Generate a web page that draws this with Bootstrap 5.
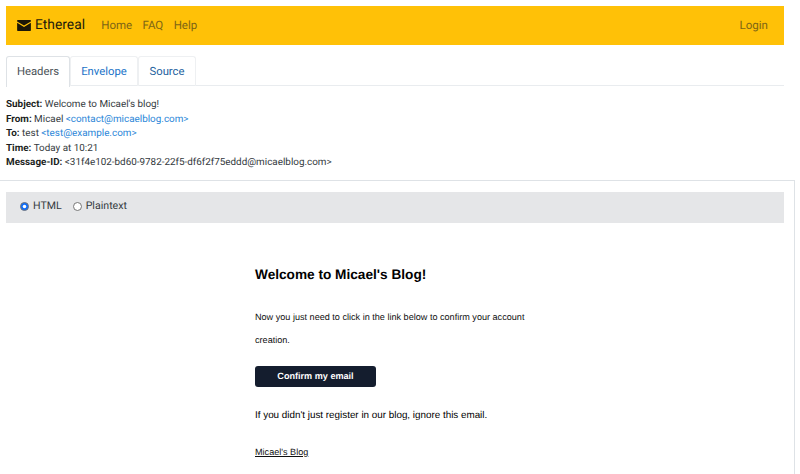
<!DOCTYPE html>
<html lang="en"><head><meta charset="utf-8"><title>Ethereal</title>
<link href="https://cdn.jsdelivr.net/npm/bootstrap@5.3.0/dist/css/bootstrap.min.css" rel="stylesheet">
<style>
html,body{height:474px;overflow:hidden}
body{font-family:Roboto,Lato,sans-serif;font-size:9.9px;line-height:14.6px;color:#343a40;background:#fff;text-rendering:geometricPrecision}
.shell{padding:6px 10px 0 6px;width:794px}
.topbar{height:39px;background:#ffc107;padding:0 11px 0 11px}
.topbar .navbar-brand{font-size:13.8px;color:#1d1a0c;padding:0;margin-right:11px;gap:4px}
.topbar .nav-link{color:#7d6516;font-size:11.5px;padding:0 5.2px}
.tabrow{margin-top:11px;height:30px;border-bottom:1px solid #e9ecef}
.tabrow .nav-link{font-size:11.3px;height:30px;padding:1px 0 0;display:flex;align-items:center;justify-content:center;border:1px solid #eef0f2;border-bottom:0;border-radius:3px 3px 0 0;color:#1a73c8}
.tabrow .nav-link.active{color:#495057;border-color:#dee2e6;background:#fff;margin-bottom:-1px;height:31px}
.tabrow .tab-b{width:68px}
.tabrow .tab-a{width:64px}
.tabrow .tab-c{width:58px;color:#1d5f9e}
.hdrs{padding:12px 6px 0;height:94px}
.hdrs a{color:#2a86d8;text-decoration:none}
.hdrs b{color:#1c1f22;font-weight:700}
.panel{width:795px;border-top:1px solid #dee2e6;border-right:1px solid #dee2e6;padding:11px 10px 0 6px;height:294px}
.modebar{height:31px;background:#e5e6e8;padding:0 0 2px 14px;gap:11px;font-size:10.6px}
.modebar .form-check{margin:0;padding:0;min-height:0;display:flex;align-items:center;gap:4px}
.modebar .form-check-input{float:none;margin:0;width:9px;height:9px;border-color:#767676}
.modebar .form-check-label{color:#343a40}
.mailbox{margin:43px 0 0 249px;width:290px;font-family:"Liberation Sans",Arial,sans-serif;color:#000}
.mailbox h1{font-size:13.65px;line-height:17px;font-weight:700;margin:0 0 23px;color:#000}
.mailbox p{font-size:9.1px;line-height:23px;margin:0;color:#111}
.cta{display:block;width:121px;height:21px;line-height:21px;margin:14px 0 22px;background:#141d2e;color:#fff;border-radius:3px;text-align:center;font-size:9.1px;font-weight:700;text-decoration:none}
.mailbox .ignore{font-size:9.85px;line-height:14px;color:#000;margin-bottom:22px}
.mailbox .site{font-size:9.1px;line-height:14px;color:#111;text-decoration:underline;display:block}
</style></head>
<body>
<div class="shell">
<nav class="navbar topbar d-flex justify-content-between align-items-center flex-nowrap">
<div class="d-flex align-items-center">
<a class="navbar-brand d-flex align-items-center" href="#"><svg width="14" height="11" viewBox="0 0 15 12" aria-hidden="true"><path fill="#1a1608" d="M.6 0h13.8c.3 0 .6.3.6.6v.9L7.5 6 0 1.5V.6C0 .3.3 0 .6 0zM0 3.1l7.5 4.5L15 3.1v8.2c0 .4-.3.7-.7.7H.7c-.4 0-.7-.3-.7-.7z"/></svg>Ethereal</a>
<div class="nav flex-row"><a class="nav-link" href="#">Home</a><a class="nav-link" href="#">FAQ</a><a class="nav-link" href="#">Help</a></div>
</div>
<a class="nav-link" href="#">Login</a>
</nav>
<ul class="nav tabrow">
<li class="nav-item"><a class="nav-link active tab-a" href="#">Headers</a></li>
<li class="nav-item"><a class="nav-link tab-b" href="#">Envelope</a></li>
<li class="nav-item"><a class="nav-link tab-c" href="#">Source</a></li>
</ul>
</div>
<div class="hdrs">
<div><b>Subject:</b> Welcome to Micael's blog!</div>
<div><b>From:</b> Micael <a href="#">&lt;contact@micaelblog.com&gt;</a></div>
<div><b>To:</b> test <a href="#">&lt;test@example.com&gt;</a></div>
<div><b>Time:</b> Today at 10:21</div>
<div><b>Message-ID:</b> &lt;31f4e102-bd60-9782-22f5-df6f2f75eddd@micaelblog.com&gt;</div>
</div>
<div class="panel">
<div class="modebar d-flex align-items-center">
<div class="form-check"><input class="form-check-input" type="radio" name="m" id="m1" checked><label class="form-check-label" for="m1">HTML</label></div>
<div class="form-check"><input class="form-check-input" type="radio" name="m" id="m2"><label class="form-check-label" for="m2">Plaintext</label></div>
</div>
<div class="mailbox">
<h1>Welcome to Micael's Blog!</h1>
<p>Now you just need to click in the link below to confirm your account creation.</p>
<a class="cta" href="#">Confirm my email</a>
<p class="ignore">If you didn't just register in our blog, ignore this email.</p>
<a class="site" href="#">Micael's Blog</a>
</div>
</div>
</body></html>
